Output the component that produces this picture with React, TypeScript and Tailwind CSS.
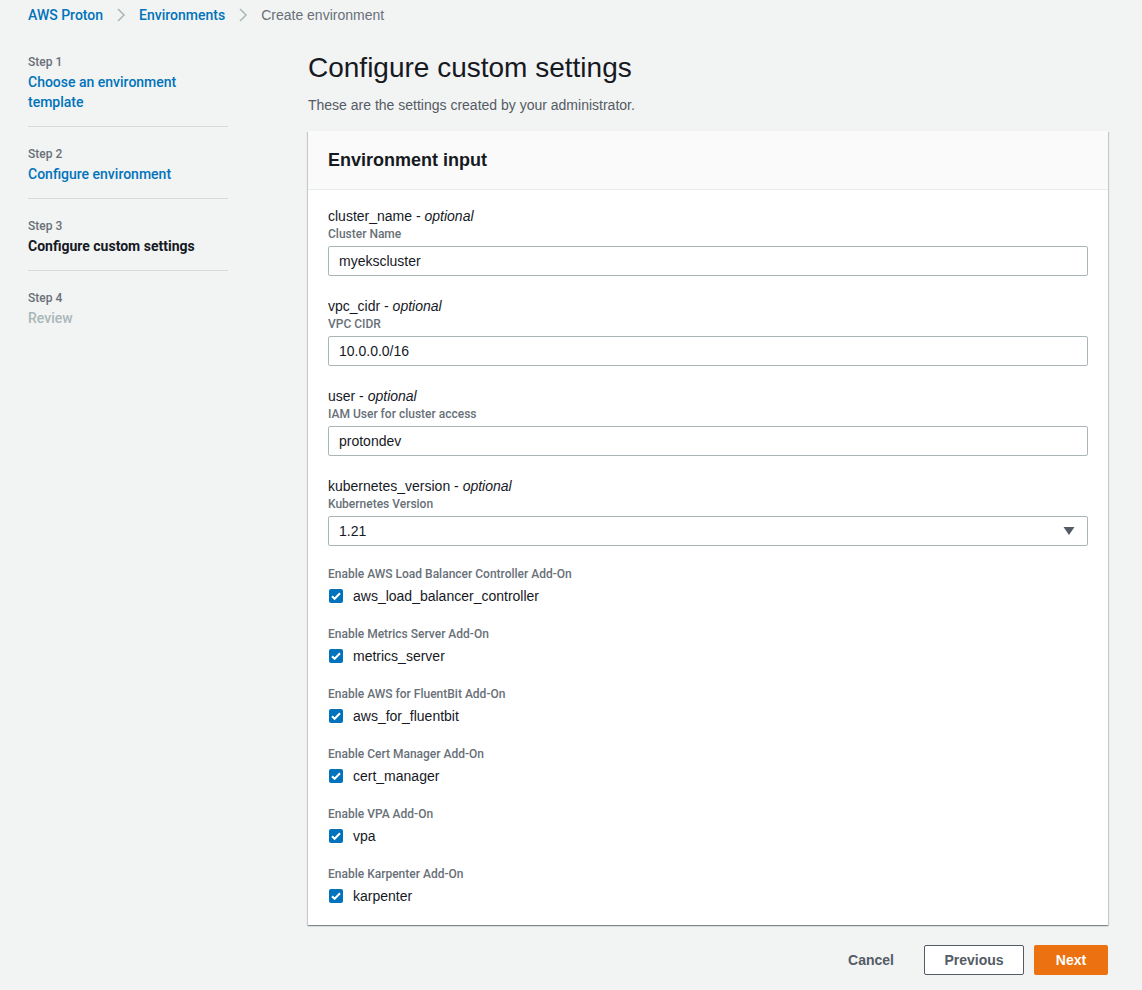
import React from 'react';

const steps = [
    { step: 'Step 1', title: 'Choose an environment template', state: 'done' },
    { step: 'Step 2', title: 'Configure environment', state: 'done' },
    { step: 'Step 3', title: 'Configure custom settings', state: 'active' },
    { step: 'Step 4', title: 'Review', state: 'disabled' },
];

const textFields = [
    { name: 'cluster_name', desc: 'Cluster Name', value: 'myekscluster' },
    { name: 'vpc_cidr', desc: 'VPC CIDR', value: '10.0.0.0/16' },
    { name: 'user', desc: 'IAM User for cluster access', value: 'protondev' },
];

const addOns = [
    { desc: 'Enable AWS Load Balancer Controller Add-On', name: 'aws_load_balancer_controller' },
    { desc: 'Enable Metrics Server Add-On', name: 'metrics_server' },
    { desc: 'Enable AWS for FluentBit Add-On', name: 'aws_for_fluentbit' },
    { desc: 'Enable Cert Manager Add-On', name: 'cert_manager' },
    { desc: 'Enable VPA Add-On', name: 'vpa' },
    { desc: 'Enable Karpenter Add-On', name: 'karpenter' },
];

const Chevron = () => (
    <svg width="16" height="16" viewBox="0 0 16 16" className="mx-[10px]">
        <path d="M5 2l6 6-6 6" fill="none" stroke="#aab7b8" strokeWidth="1.5" />
    </svg>
);

const Checkbox = () => (
    <span className="w-[14px] h-[14px] rounded-[2px] bg-[#0073bb] flex items-center justify-center flex-shrink-0">
        <svg width="14" height="14" viewBox="0 0 14 14">
            <path d="M3 7.2l2.6 2.6L11 4.2" fill="none" stroke="#fff" strokeWidth="2" />
        </svg>
    </span>
);

const FieldLabel = ({ name, desc }: { name: string; desc: string }) => (
    <>
        <div className="text-[14px] leading-[20px] text-[#16191f]">
            {name} - <i>optional</i>
        </div>
        <div className="text-[12px] leading-[16px] text-[#687078] font-['Roboto',sans-serif] font-medium">{desc}</div>
    </>
);

const App = () => {
    return (
        <div className="min-h-[990px] bg-[#f2f3f3] font-['Liberation_Sans',Arial,sans-serif] text-[#16191f]">
            {/* Breadcrumb */}
            <nav className="flex items-center pl-[28px] h-[30px] text-[14px]">
                <span className="text-[#0073bb] font-['Roboto',sans-serif] font-medium">AWS Proton</span>
                <Chevron />
                <span className="text-[#0073bb] font-['Roboto',sans-serif] font-medium">Environments</span>
                <Chevron />
                <span className="text-[#687078]">Create environment</span>
            </nav>

            <div className="flex pt-[22px]">
                {/* Steps */}
                <ol className="w-[200px] ml-[28px] pt-[2px] flex-shrink-0">
                    {steps.map((s, i) => (
                        <li
                            key={s.step}
                            className={`pb-[14px] ${i > 0 ? 'pt-[19px]' : ''} ${i < steps.length - 1 ? 'border-b border-[#d5dbdb]' : ''}`}
                        >
                            <div className="text-[12px] leading-[16px] text-[#687078] font-['Roboto',sans-serif] font-medium">
                                {s.step}
                            </div>
                            <div
                                className={`text-[14px] leading-[20px] font-['Roboto',sans-serif] mt-[2px] ${
                                    s.state === 'done'
                                        ? 'text-[#0073bb] font-medium'
                                        : s.state === 'active'
                                        ? 'text-[#16191f] font-bold'
                                        : 'text-[#aab7b8] font-medium'
                                }`}
                            >
                                {s.title === 'Choose an environment template' ? (
                                    <>
                                        Choose an environment
                                        <br />
                                        template
                                    </>
                                ) : (
                                    s.title
                                )}
                            </div>
                        </li>
                    ))}
                </ol>

                {/* Main */}
                <main className="ml-[80px] w-[800px]">
                    <h1 className="text-[28px] leading-[36px] text-[#16191f] mt-[-2px]">Configure custom settings</h1>
                    <p className="text-[14px] leading-[20px] text-[#545b64] mt-[9px]">
                        These are the settings created by your administrator.
                    </p>

                    <section className="mt-[16px] bg-white shadow-[0_1px_1px_0_rgba(0,28,36,0.3),1px_1px_1px_0_rgba(0,28,36,0.15),-1px_1px_1px_0_rgba(0,28,36,0.15)]">
                        <div className="h-[59px] bg-[#fafafa] border-b border-[#eaeded] px-[20px] flex items-center">
                            <h2 className="text-[18px] font-bold leading-[22px]">Environment input</h2>
                        </div>

                        <div className="px-[20px] pt-[16px] pb-[19px]">
                            {textFields.map((f) => (
                                <div key={f.name} className="mb-[20px]">
                                    <FieldLabel name={f.name} desc={f.desc} />
                                    <div className="mt-[4px] h-[30px] border border-[#aab7b8] rounded-[2px] flex items-center px-[10px] text-[14px]">
                                        {f.value}
                                    </div>
                                </div>
                            ))}

                            <div className="mb-[20px]">
                                <FieldLabel name="kubernetes_version" desc="Kubernetes Version" />
                                <div className="mt-[4px] h-[30px] border border-[#aab7b8] rounded-[2px] flex items-center justify-between pl-[10px] pr-[12px] text-[14px]">
                                    <span>1.21</span>
                                    <svg width="12" height="10" viewBox="0 0 12 10">
                                        <path d="M0.5 1h11L6 9z" fill="#545b64" />
                                    </svg>
                                </div>
                            </div>

                            {addOns.map((a, i) => (
                                <div key={a.name} className={i < addOns.length - 1 ? 'mb-[20px]' : ''}>
                                    <div className="text-[12px] leading-[16px] text-[#687078] font-['Roboto',sans-serif] font-medium">
                                        {a.desc}
                                    </div>
                                    <label className="flex items-center gap-[10px] mt-[4px] h-[20px] pl-[1px]">
                                        <Checkbox />
                                        <span className="text-[14px] leading-[20px]">{a.name}</span>
                                    </label>
                                </div>
                            ))}
                        </div>
                    </section>

                    {/* Actions */}
                    <div className="flex justify-end items-center mt-[20px] gap-[10px]">
                        <button className="h-[30px] px-[20px] text-[14px] font-bold text-[#545b64]">Cancel</button>
                        <button className="h-[30px] w-[100px] border border-[#545b64] rounded-[2px] bg-white text-[14px] font-bold text-[#545b64]">
                            Previous
                        </button>
                        <button className="h-[30px] w-[74px] rounded-[2px] bg-[#ec7211] text-[14px] font-bold text-white">
                            Next
                        </button>
                    </div>
                </main>
            </div>
        </div>
    );
};

export default App;
